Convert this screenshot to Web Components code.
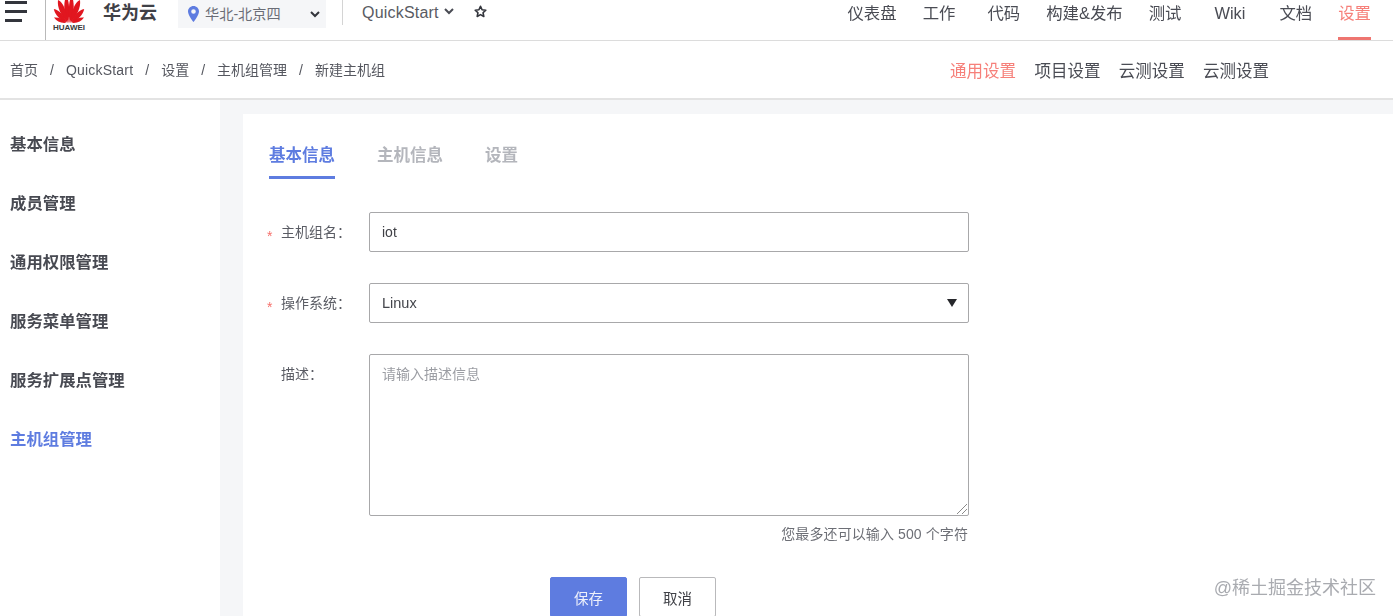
<!DOCTYPE html>
<html lang="zh">
<head>
<meta charset="utf-8">
<title>新建主机组</title>
<style>
  html, body {
    margin: 0;
    height: 616px;
    overflow: hidden;
    background: #f5f6f8;
    color: #4a4c54;
    font-family: "Liberation Sans", "Noto Sans CJK SC", sans-serif;
  }
</style>
</head>
<body>
<hw-page>
  <hw-topbar slot="top"></hw-topbar>
  <hw-crumbs slot="top"></hw-crumbs>
  <hw-sidebar slot="side">
    <hw-side-item>基本信息</hw-side-item>
    <hw-side-item>成员管理</hw-side-item>
    <hw-side-item>通用权限管理</hw-side-item>
    <hw-side-item>服务菜单管理</hw-side-item>
    <hw-side-item>服务扩展点管理</hw-side-item>
    <hw-side-item active>主机组管理</hw-side-item>
  </hw-sidebar>
  <hw-card slot="main">
    <hw-tabs></hw-tabs>
    <hw-field label="主机组名：" required><hw-box>iot</hw-box></hw-field>
    <hw-field label="操作系统：" required><hw-box select>Linux</hw-box></hw-field>
    <hw-field label="描述："><hw-box area>请输入描述信息</hw-box></hw-field>
    <hw-actions></hw-actions>
  </hw-card>
</hw-page>

<script>
const hw_page = document.createElement('template');
hw_page.innerHTML = /*html*/ `
<style>
  :host { display: block; position: relative; height: 616px; overflow: hidden; filter: blur(0.4px); }
  #body { display: flex; height: 517px; }
  #watermark {
    position: absolute;
    right: 17px;
    bottom: 16px;
    font-size: 18px;
    line-height: 24px;
    color: #a9abb0;
  }
</style>
<slot name="top"></slot>
<div id="body">
  <slot name="side"></slot>
  <slot name="main"></slot>
</div>
<div id="watermark">@稀土掘金技术社区</div>
`;

const hw_topbar = document.createElement('template');
hw_topbar.innerHTML = /*html*/ `
<style>
  :host {
    display: flex;
    align-items: flex-start;
    height: 40px;
    border-bottom: 1px solid #dcdcdc;
    background: #fff;
    color: #4a4c54;
    font-size: 16px;
    line-height: 26px;
  }
  #burger { display: block; margin-left: 5px; width: 22px; height: 24px; }
  #rule { width: 1px; height: 40px; margin-left: 18px; background: #b9b9b9; }
  #logo { display: flex; flex-direction: column; align-items: center; width: 32px; margin-left: 7px; }
  #logo svg { display: block; }
  #logo span { font-size: 8px; line-height: 9px; font-weight: bold; color: #3a3a3a; }
  #brand { margin-left: 18px; font-size: 18px; font-weight: bold; color: #3f4046; }
  #region {
    display: flex;
    align-items: center;
    width: 148px;
    height: 28px;
    margin-left: 21px;
    background: #f5f6f8;
    font-size: 14.200px;
    box-sizing: border-box;
    padding-left: 10px;
    color: #6a6d76;
  }
  #region span { margin-left: 6px; flex: 1; }
  #region svg:last-child { margin-right: 6px; }
  #bar { width: 1px; height: 25px; margin-left: 16px; background: #d4d4d4; }
  #project { margin-left: 19px; color: #595b63; letter-spacing: .2px; line-height: 25px; }
  #project-arrow { margin: 8px 0 0 5px; }
  #star { margin: 5px 0 0 20px; }
  nav { display: flex; gap: 26px; margin-left: auto; padding-right: 22px; }
  nav a { display: block; height: 40px; box-sizing: border-box; border-bottom: 3px solid transparent; white-space: nowrap; font-size: 16.400px; }
  nav a.narrow { margin-left: 6px; }
  nav a.wide { margin-left: 7px; }
  nav a.wider { margin-left: 8px; }
  nav a.active { color: #f6807a; border-bottom-color: #ee7570; }
</style>
<svg id="burger" viewBox="0 0 22 24"><path d="M0 2.500h22M0 11.500h22M0 20.500h17" stroke="#33353c" stroke-width="3" fill="none"/></svg>
<div id="rule"></div>
<div id="logo">
  <svg width="32" height="23" viewBox="0 0 32 23">
    <g fill="#e1161f">
      <path d="M15.400 23 C11 14 10 5 13 -4 C16 -1 17 9 15.400 23Z"/>
      <path d="M16.600 23 C21 14 22 5 19 -4 C16 -1 15 9 16.600 23Z"/>
      <path d="M14.600 23 C8 15 4 8 5 0 C10 2 14 11 14.600 23Z"/>
      <path d="M17.400 23 C24 15 28 8 27 0 C22 2 18 11 17.400 23Z"/>
      <path d="M13.800 22.600 C7 20 2 15 0.800 9 C6 10 11 15 13.800 22.600Z"/>
      <path d="M18.200 22.600 C25 20 30 15 31.200 9 C26 10 21 15 18.200 22.600Z"/>
      <path d="M13.200 22.800 C8 23.400 3.500 21.500 1 17.600 C6 17.200 10.500 19 13.200 22.800Z"/>
      <path d="M18.800 22.800 C24 23.400 28.500 21.500 31 17.600 C26 17.200 21.500 19 18.800 22.800Z"/>
    </g>
  </svg>
  <span>HUAWEI</span>
</div>
<div id="brand">华为云</div>
<div id="region">
  <svg width="11" height="16" viewBox="0 0 11 16"><path fill-rule="evenodd" d="M5.500 0C2.500 0 0 2.400 0 5.500 0 9.500 5.500 16 5.500 16S11 9.500 11 5.500C11 2.400 8.500 0 5.500 0ZM5.500 3.200a2.300 2.300 0 1 1 0 4.600 2.300 2.300 0 0 1 0-4.600Z" fill="#5e7ce0"/></svg>
  <span>华北-北京四</span>
  <svg width="10" height="7" viewBox="0 0 10 7"><path d="M1 1l4 4 4-4" stroke="#33353c" stroke-width="2" fill="none"/></svg>
</div>
<div id="bar"></div>
<div id="project">QuickStart</div>
<svg id="project-arrow" width="10" height="7" viewBox="0 0 10 7"><path d="M1 1l4 4 4-4" stroke="#4a4c54" stroke-width="2" fill="none"/></svg>
<svg id="star" width="13" height="13" viewBox="0 0 24 24"><path d="M12 2.500l2.900 6.300 6.900.8-5.100 4.700 1.400 6.800-6.100-3.400-6.100 3.400 1.400-6.800L2.200 9.600l6.900-.8Z" fill="none" stroke="#33353c" stroke-width="3" stroke-linejoin="round"/></svg>
<nav>
  <a>仪表盘</a><a>工作</a><a class="narrow">代码</a><a>构建&amp;发布</a><a>测试</a><a class="wide">Wiki</a><a class="wider">文档</a><a class="active">设置</a>
</nav>
`;

const hw_crumbs = document.createElement('template');
hw_crumbs.innerHTML = /*html*/ `
<style>
  :host {
    display: flex;
    align-items: center;
    height: 57px;
    box-sizing: content-box;
    border-bottom: 2px solid #e3e3e3;
    background: #fff;
    padding: 0 124px 0 10px;
    font-size: 14px;
    line-height: 20px;
    color: #55575f;
  }
  ol { display: flex; gap: 12px; margin: 0; padding: 0; list-style: none; }
  li { white-space: nowrap; height: 20px; }
  li.latin { letter-spacing: .2px; }
  nav { display: flex; gap: 18.300px; margin-left: auto; padding-top: 2px; font-size: 16.500px; color: #4a4c54; }
  nav .active { color: #f6807a; }
</style>
<ol>
  <li>首页</li><li>/</li><li class="latin">QuickStart</li><li>/</li><li>设置</li><li>/</li><li>主机组管理</li><li>/</li><li>新建主机组</li>
</ol>
<nav>
  <span class="active">通用设置</span><span>项目设置</span><span>云测设置</span><span>云测设置</span>
</nav>
`;

const hw_sidebar = document.createElement('template');
hw_sidebar.innerHTML = /*html*/ `
<style>
  :host {
    display: flex;
    flex-direction: column;
    width: 220px;
    flex: none;
    padding-top: 15px;
    box-sizing: border-box;
    background: #fff;
  }
</style>
<slot></slot>
`;

const hw_side_item = document.createElement('template');
hw_side_item.innerHTML = /*html*/ `
<style>
  :host {
    display: block;
    height: 59px;
    padding-left: 10px;
    font-size: 16.400px;
    font-weight: bold;
    line-height: 59px;
    color: #484a52;
  }
  :host([active]) { color: #5e7ce0; }
</style>
<slot></slot>
`;

const hw_card = document.createElement('template');
hw_card.innerHTML = /*html*/ `
<style>
  :host {
    display: flex;
    flex-direction: column;
    flex: 1;
    margin: 14px 0 0 23px;
    padding: 25px 0 0 24px;
    background: #fff;
  }
</style>
<slot></slot>
`;

const hw_tabs = document.createElement('template');
hw_tabs.innerHTML = /*html*/ `
<style>
  :host {
    display: flex;
    gap: 42px;
    margin: 0 0 33px 2px;
    font-size: 16.500px;
    font-weight: bold;
    line-height: 32px;
    color: #b4b6bc;
  }
  span { display: block; height: 40px; box-sizing: border-box; }
  span.active { color: #5e7ce0; border-bottom: 3px solid #5e7ce0; }
</style>
<span class="active">基本信息</span><span>主机信息</span><span>设置</span>
`;

class HwField extends HTMLElement {
  constructor() {
    super();
    this.attachShadow({ mode: 'open' });
    const star = this.hasAttribute('required') ? '<i>*</i>' : '<i></i>';
    this.shadowRoot.innerHTML = /*html*/ `
    <style>
      :host {
        display: grid;
        grid-template-columns: 14px 88px 600px;
        align-items: start;
        margin-bottom: 31px;
        font-size: 14px;
        line-height: 40px;
        color: #5a5c64;
      }
      i { height: 40px; font-style: normal; color: #f66f6a; line-height: 48px; }
      label { white-space: nowrap; }
    </style>
    ${star}<label>${this.getAttribute('label')}</label><slot></slot>
    `;
  }
}

class HwBox extends HTMLElement {
  constructor() {
    super();
    this.attachShadow({ mode: 'open' });
    let extra = '';
    if (this.hasAttribute('select')) {
      extra = '<svg id="caret" width="10" height="8" viewBox="0 0 10 8"><path d="M0 0h10L5 8Z" fill="#26272b"/></svg>';
    }
    if (this.hasAttribute('area')) {
      extra = '<svg id="grip" width="12" height="12" viewBox="0 0 12 12"><path d="M1 11L11 1M6 11l5-5" stroke="#8a8a8a" fill="none"/></svg>';
    }
    this.shadowRoot.innerHTML = /*html*/ `
    <style>
      :host {
        display: flex;
        align-items: center;
        justify-content: space-between;
        position: relative;
        height: 40px;
        box-sizing: border-box;
        padding: 0 12px;
        border: 1px solid #a8a8aa;
        border-radius: 2px;
        font-size: 14px;
        color: #3f4046;
      }
      :host([select]) { font-size: 14.500px; color: #44464c; }
      :host([area]) {
        display: block;
        height: 162px;
        line-height: 38px;
        color: #9b9da3;
      }
      #caret { margin-right: -1px; }
      #grip { position: absolute; right: 0; bottom: 0; }
    </style>
    <span><slot></slot></span>${extra}
    `;
  }
}

const hw_actions = document.createElement('template');
hw_actions.innerHTML = /*html*/ `
<style>
  :host { display: block; width: 702px; margin-top: -31px; }
  #hint {
    padding: 8px 1px 0 0;
    text-align: right;
    font-size: 14px;
    line-height: 20px;
    letter-spacing: .1px;
    color: #6d6f76;
  }
  #buttons { display: flex; gap: 12px; margin: 33px 0 0 283px; }
  button {
    width: 77px;
    height: 40px;
    border: 1px solid #b9b9bb;
    border-radius: 2px;
    background: #fff;
    color: #3f4046;
    font: inherit;
    font-size: 14.500px;
    padding: 0;
  }
  button.primary { background: #5e7ce0; border-color: #5e7ce0; color: #eef1fb; }
</style>
<div id="hint">您最多还可以输入 500 个字符</div>
<div id="buttons">
  <button class="primary">保存</button><button>取消</button>
</div>
`;

// elements that are only a template and a shadow root
function simple(name, tpl) {
  customElements.define(name, class extends HTMLElement {
    constructor() {
      super();
      this.attachShadow({ mode: 'open' });
      this.shadowRoot.appendChild(tpl.content.cloneNode(true));
    }
  });
}

simple('hw-page', hw_page);
simple('hw-topbar', hw_topbar);
simple('hw-crumbs', hw_crumbs);
simple('hw-sidebar', hw_sidebar);
simple('hw-side-item', hw_side_item);
simple('hw-card', hw_card);
simple('hw-tabs', hw_tabs);
simple('hw-actions', hw_actions);
customElements.define('hw-field', HwField);
customElements.define('hw-box', HwBox);
</script>
</body>
</html>
